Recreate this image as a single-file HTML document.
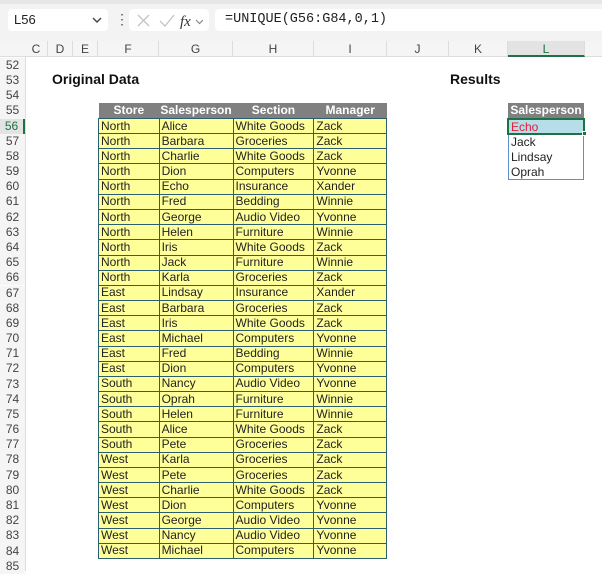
<!DOCTYPE html><html><head><style>
*{margin:0;padding:0;box-sizing:border-box}
body{width:602px;height:571px;overflow:hidden;background:#fff;font-family:"Liberation Sans",Arial,sans-serif;position:relative}
.a{position:absolute}
.rh{position:absolute;left:0;width:25px;font-size:12px;color:#444;text-align:center;background:#f5f5f5;height:15.18px;line-height:15px}
.ch{position:absolute;top:41px;height:16px;font-size:12px;color:#444;text-align:center;line-height:16px;border-right:1px solid #ddd}
table{position:absolute;border-collapse:collapse;font-size:12px}
td{border:1px solid #2d5e6e;height:15.18px;padding:0 2px;line-height:13px;white-space:nowrap;color:#222}
th{background:#808080;color:#fff;font-weight:bold;height:15.18px;padding:0;line-height:13px;font-size:12px}
.y td{background:#ffff99}
</style></head><body>
<div class="a" style="left:0;top:0;width:602px;height:41px;background:#f3f3f3"></div>
<div class="a" style="left:0;top:0;width:602px;height:4px;background:#e6e6e6"></div>
<div class="a" style="left:8px;top:9px;width:100px;height:22px;background:#fff;border-radius:4px;font-size:13px;line-height:22px;padding-left:6px;color:#222">L56</div>
<svg class="a" style="left:92px;top:17px" width="10" height="7"><path d="M1 1 L5 5 L9 1" stroke="#444" stroke-width="1.4" fill="none"/></svg>
<div class="a" style="left:115px;top:11px;font-size:14px;color:#555">&#8942;</div>
<div class="a" style="left:129px;top:9px;width:80px;height:22px;background:#fff;border-radius:4px"></div>
<svg class="a" style="left:134px;top:12px" width="72" height="18"><path d="M4 3 L15 14 M15 3 L4 14" stroke="#c4c4c4" stroke-width="1.3" fill="none"/><path d="M26 9 L31 14 L40 3" stroke="#c4c4c4" stroke-width="1.3" fill="none"/><text x="46" y="14" font-family="Liberation Serif,serif" font-style="italic" font-size="15" fill="#333">fx</text><path d="M62 8 L65.5 11.5 L69 8" stroke="#888" stroke-width="1.2" fill="none"/></svg>
<div class="a" style="left:215px;top:9px;width:390px;height:22px;background:#fff;border-radius:4px;font-family:'Liberation Mono',monospace;font-size:13.5px;line-height:22px;padding-left:10px;color:#222">=UNIQUE(G56:G84,0,1)</div>
<div class="a" style="left:0;top:41px;width:602px;height:16px;background:#f5f5f5;border-bottom:1px solid #ddd"></div>
<div class="ch" style="left:25px;width:23px">C</div><div class="ch" style="left:48px;width:25px">D</div><div class="ch" style="left:73px;width:25px">E</div><div class="ch" style="left:98px;width:61px">F</div><div class="ch" style="left:159px;width:74px">G</div><div class="ch" style="left:233px;width:81px">H</div><div class="ch" style="left:314px;width:73px">I</div><div class="ch" style="left:387px;width:62px">J</div><div class="ch" style="left:449px;width:59px">K</div><div class="ch" style="left:508px;width:77px;background:#e3e3e3;border-bottom:2px solid #1e7145;color:#1e7145">L</div>
<div class="a" style="left:25px;top:57px;width:1px;height:514px;background:#ddd"></div>
<div class="rh" style="top:57.8px">52</div><div class="rh" style="top:72.98px">53</div><div class="rh" style="top:88.16px">54</div><div class="rh" style="top:103.34px">55</div><div class="rh" style="top:118.52px;background:#e3e3e3;color:#1e7145;border-right:2px solid #1e7145">56</div><div class="rh" style="top:133.7px">57</div><div class="rh" style="top:148.88px">58</div><div class="rh" style="top:164.06px">59</div><div class="rh" style="top:179.24px">60</div><div class="rh" style="top:194.42px">61</div><div class="rh" style="top:209.6px">62</div><div class="rh" style="top:224.78px">63</div><div class="rh" style="top:239.96px">64</div><div class="rh" style="top:255.14px">65</div><div class="rh" style="top:270.32px">66</div><div class="rh" style="top:285.5px">67</div><div class="rh" style="top:300.68px">68</div><div class="rh" style="top:315.86px">69</div><div class="rh" style="top:331.04px">70</div><div class="rh" style="top:346.22px">71</div><div class="rh" style="top:361.4px">72</div><div class="rh" style="top:376.58px">73</div><div class="rh" style="top:391.76px">74</div><div class="rh" style="top:406.94px">75</div><div class="rh" style="top:422.12px">76</div><div class="rh" style="top:437.3px">77</div><div class="rh" style="top:452.48px">78</div><div class="rh" style="top:467.66px">79</div><div class="rh" style="top:482.84px">80</div><div class="rh" style="top:498.02px">81</div><div class="rh" style="top:513.2px">82</div><div class="rh" style="top:528.38px">83</div><div class="rh" style="top:543.56px">84</div><div class="rh" style="top:558.74px">85</div>
<div class="a" style="left:52px;top:71px;font-size:14px;font-weight:bold;color:#111">Original Data</div>
<div class="a" style="left:450px;top:71px;font-size:14px;font-weight:bold;color:#111">Results</div>
<table class="y" style="left:98px;top:103.3px;width:289px">
<colgroup><col style="width:61px"><col style="width:74px"><col style="width:81px"><col style="width:73px"></colgroup>
<tr><th>Store</th><th>Salesperson</th><th>Section</th><th>Manager</th></tr>
<tr><td>North</td><td>Alice</td><td>White Goods</td><td>Zack</td></tr>
<tr><td>North</td><td>Barbara</td><td>Groceries</td><td>Zack</td></tr>
<tr><td>North</td><td>Charlie</td><td>White Goods</td><td>Zack</td></tr>
<tr><td>North</td><td>Dion</td><td>Computers</td><td>Yvonne</td></tr>
<tr><td>North</td><td>Echo</td><td>Insurance</td><td>Xander</td></tr>
<tr><td>North</td><td>Fred</td><td>Bedding</td><td>Winnie</td></tr>
<tr><td>North</td><td>George</td><td>Audio Video</td><td>Yvonne</td></tr>
<tr><td>North</td><td>Helen</td><td>Furniture</td><td>Winnie</td></tr>
<tr><td>North</td><td>Iris</td><td>White Goods</td><td>Zack</td></tr>
<tr><td>North</td><td>Jack</td><td>Furniture</td><td>Winnie</td></tr>
<tr><td>North</td><td>Karla</td><td>Groceries</td><td>Zack</td></tr>
<tr><td>East</td><td>Lindsay</td><td>Insurance</td><td>Xander</td></tr>
<tr><td>East</td><td>Barbara</td><td>Groceries</td><td>Zack</td></tr>
<tr><td>East</td><td>Iris</td><td>White Goods</td><td>Zack</td></tr>
<tr><td>East</td><td>Michael</td><td>Computers</td><td>Yvonne</td></tr>
<tr><td>East</td><td>Fred</td><td>Bedding</td><td>Winnie</td></tr>
<tr><td>East</td><td>Dion</td><td>Computers</td><td>Yvonne</td></tr>
<tr><td>South</td><td>Nancy</td><td>Audio Video</td><td>Yvonne</td></tr>
<tr><td>South</td><td>Oprah</td><td>Furniture</td><td>Winnie</td></tr>
<tr><td>South</td><td>Helen</td><td>Furniture</td><td>Winnie</td></tr>
<tr><td>South</td><td>Alice</td><td>White Goods</td><td>Zack</td></tr>
<tr><td>South</td><td>Pete</td><td>Groceries</td><td>Zack</td></tr>
<tr><td>West</td><td>Karla</td><td>Groceries</td><td>Zack</td></tr>
<tr><td>West</td><td>Pete</td><td>Groceries</td><td>Zack</td></tr>
<tr><td>West</td><td>Charlie</td><td>White Goods</td><td>Zack</td></tr>
<tr><td>West</td><td>Dion</td><td>Computers</td><td>Yvonne</td></tr>
<tr><td>West</td><td>George</td><td>Audio Video</td><td>Yvonne</td></tr>
<tr><td>West</td><td>Nancy</td><td>Audio Video</td><td>Yvonne</td></tr>
<tr><td>West</td><td>Michael</td><td>Computers</td><td>Yvonne</td></tr>
</table>
<div class="a" style="left:508px;top:103.3px;width:76px;height:15.2px;background:#808080;color:#fff;font-weight:bold;font-size:12px;text-align:center;line-height:15px">Salesperson</div>
<div class="a" style="left:508px;top:118.5px;width:76px;height:61px;border:1px solid #5b8fd0;font-size:12px;color:#222">
<div style="height:15.2px;line-height:15px;padding-left:2px;background:#b7dde8;color:#e0203a">Echo</div>
<div style="height:15.2px;line-height:15px;padding-left:2px">Jack</div>
<div style="height:15.2px;line-height:15px;padding-left:2px">Lindsay</div>
<div style="height:15.2px;line-height:15px;padding-left:2px">Oprah</div>
</div>
<div class="a" style="left:507px;top:117.5px;width:78px;height:17px;border:2px solid #1e7145"></div>
<div class="a" style="left:582px;top:131px;width:5px;height:5px;background:#1e7145;border:1px solid #fff"></div>
</body></html>
